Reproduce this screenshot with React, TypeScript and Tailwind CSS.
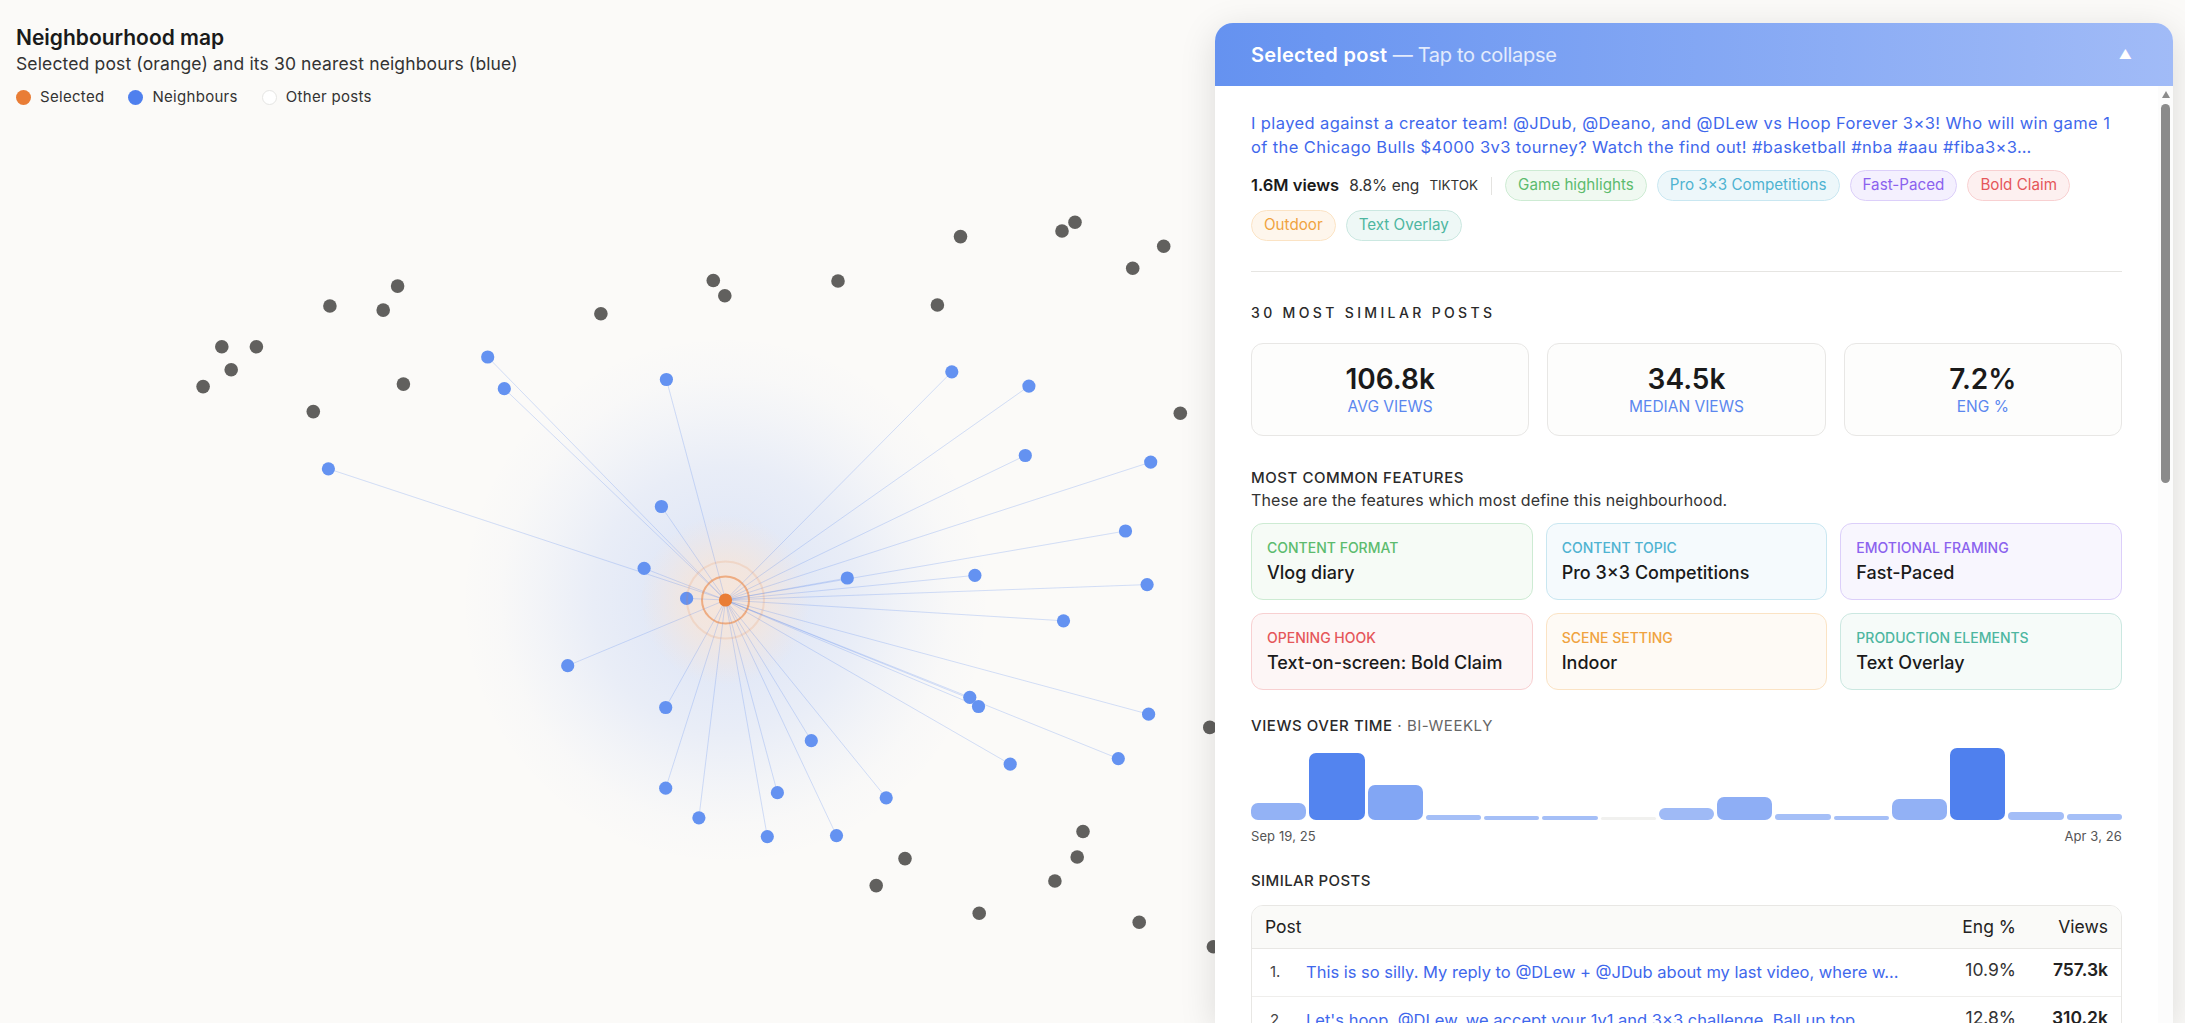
const center = { x: 725.5, y: 600 };

const others = [
  [960.5, 236.6], [1062, 231], [1075, 222.3], [1163.7, 246.3], [1132.7, 268.3],
  [713.3, 280.5], [724.8, 295.8], [838, 281], [937.4, 305], [397.6, 286.1],
  [329.9, 306], [383.2, 310.1], [600.9, 313.7], [221.8, 346.8], [256.4, 346.8],
  [231.2, 369.8], [203.1, 386.6], [403.4, 384.1], [313.3, 411.6], [1180.3, 413.2],
  [1209.8, 727.4], [1083, 831.5], [1077.2, 857], [905, 858.6], [876.2, 885.6],
  [1054.9, 881], [979.2, 913.2], [1139.2, 922.3], [1213.4, 946.8],
];

const neighbours = [
  [487.7, 357], [504.3, 388.7], [666.4, 379.5], [951.8, 371.8], [1028.9, 386.1],
  [1025.3, 455.5], [1150.7, 462.1], [328.4, 468.8], [661.4, 506.5], [1125.5, 531],
  [644.1, 568.3], [847.3, 578], [974.9, 575.4], [1147.1, 584.6], [686.6, 598.4],
  [1063.5, 620.8], [567.7, 665.7], [665.7, 707.5], [811.3, 740.7], [969.8, 697.3],
  [978.5, 706.5], [1148.6, 714.2], [1118.3, 758.6], [1010.2, 764.2], [886.2, 797.8],
  [665.7, 788.2], [777.4, 792.7], [698.9, 817.8], [767.3, 836.6], [836.5, 835.6],
];

const pills = [
  { label: "Game highlights", cls: "text-[#5cbb6e] bg-[#f0f9f1] border-[#cdebd3]" },
  { label: "Pro 3×3 Competitions", cls: "text-[#4fb3d1] bg-[#edf7fa] border-[#c9e7f1]" },
  { label: "Fast-Paced", cls: "text-[#8b62ee] bg-[#f4f0fe] border-[#dccffa]" },
  { label: "Bold Claim", cls: "text-[#e5575a] bg-[#fdf0f0] border-[#f8d0d1]" },
  { label: "Outdoor", cls: "text-[#f0a33f] bg-[#fef6ec] border-[#fbe3c4]" },
  { label: "Text Overlay", cls: "text-[#4db6a0] bg-[#eef8f6] border-[#cbe8e1]" },
];

const stats = [
  { value: "106.8k", label: "AVG VIEWS" },
  { value: "34.5k", label: "MEDIAN VIEWS" },
  { value: "7.2%", label: "ENG %" },
];

const features = [
  { label: "CONTENT FORMAT", value: "Vlog diary", cls: "bg-[#f6fbf6] border-[#cdebd3]", text: "text-[#5cbb6e]" },
  { label: "CONTENT TOPIC", value: "Pro 3×3 Competitions", cls: "bg-[#f5fafd] border-[#c9e7f1]", text: "text-[#4fb3d1]" },
  { label: "EMOTIONAL FRAMING", value: "Fast-Paced", cls: "bg-[#f8f6fe] border-[#dccffa]", text: "text-[#8b62ee]" },
  { label: "OPENING HOOK", value: "Text-on-screen: Bold Claim", cls: "bg-[#fdf6f6] border-[#f8d0d1]", text: "text-[#e5575a]" },
  { label: "SCENE SETTING", value: "Indoor", cls: "bg-[#fefaf5] border-[#fbe3c4]", text: "text-[#f0a33f]" },
  { label: "PRODUCTION ELEMENTS", value: "Text Overlay", cls: "bg-[#f6fbf9] border-[#cbe8e1]", text: "text-[#4db6a0]" },
];

const bars = [
  { h: 17, cls: "bg-[#93b2f5]" },
  { h: 67, cls: "bg-[#5384ef]" },
  { h: 35, cls: "bg-[#82a6f4]" },
  { h: 5, cls: "bg-[#a5bff7]" },
  { h: 4, cls: "bg-[#a5bff7]" },
  { h: 4, cls: "bg-[#a5bff7]" },
  { h: 3, cls: "bg-[#f1f1ef]" },
  { h: 12, cls: "bg-[#9fbaf6]" },
  { h: 23, cls: "bg-[#8eaef5]" },
  { h: 6, cls: "bg-[#a5bff7]" },
  { h: 4, cls: "bg-[#a5bff7]" },
  { h: 21, cls: "bg-[#92b1f5]" },
  { h: 72, cls: "bg-[#4f80ee]" },
  { h: 8, cls: "bg-[#a3bdf7]" },
  { h: 6, cls: "bg-[#a5bff7]" },
];

const rows = [
  { n: "1.", text: "This is so silly. My reply to @DLew + @JDub about my last video, where w…", eng: "10.9%", views: "757.3k" },
  { n: "2.", text: "Let's hoop, @DLew, we accept your 1v1 and 3×3 challenge. Ball up top.", eng: "12.8%", views: "310.2k" },
];

function NeighbourMap() {
  return (
    <svg className="absolute inset-0" width="2185" height="1023">
      <defs>
        <radialGradient id="blueGlow">
          <stop offset="0%" stopColor="#4f80ee" stopOpacity="0.17" />
          <stop offset="30%" stopColor="#4f80ee" stopOpacity="0.14" />
          <stop offset="50%" stopColor="#4f80ee" stopOpacity="0.105" />
          <stop offset="70%" stopColor="#4f80ee" stopOpacity="0.05" />
          <stop offset="85%" stopColor="#4f80ee" stopOpacity="0.015" />
          <stop offset="100%" stopColor="#4f80ee" stopOpacity="0" />
        </radialGradient>
        <radialGradient id="orangeGlow">
          <stop offset="0%" stopColor="#f9e5d6" stopOpacity="0.9" />
          <stop offset="40%" stopColor="#f9e5d6" stopOpacity="0.72" />
          <stop offset="100%" stopColor="#f9e5d6" stopOpacity="0" />
        </radialGradient>
      </defs>
      <circle cx={center.x} cy={center.y} r="265" fill="url(#blueGlow)" />
      <circle cx={center.x} cy={center.y} r="85" fill="url(#orangeGlow)" />
      {neighbours.map(([x, y], i) => (
        <line key={i} x1={center.x} y1={center.y} x2={x} y2={y} stroke="#4f80ee" strokeOpacity="0.24" strokeWidth="1" />
      ))}
      {others.map(([x, y], i) => (
        <circle key={i} cx={x} cy={y} r="6.8" fill="#61605e" />
      ))}
      {neighbours.map(([x, y], i) => (
        <circle key={i} cx={x} cy={y} r="6.6" fill="#6492f1" />
      ))}
      <circle cx={center.x} cy={center.y} r="38.5" fill="none" stroke="#e97d36" strokeOpacity="0.15" strokeWidth="2" />
      <circle cx={center.x} cy={center.y} r="23.5" fill="none" stroke="#e97d36" strokeOpacity="0.55" strokeWidth="2" />
      <circle cx={center.x} cy={center.y} r="6.6" fill="#e97d36" />
    </svg>
  );
}

function DetailPanel() {
  return (
    <div className="absolute left-[1215px] right-[12px] top-[23px] bottom-0 flex flex-col overflow-hidden rounded-t-[18px] bg-white shadow-[0_8px_36px_rgba(0,0,0,0.13)]">
      {/* Header */}
      <div className="flex h-[63px] shrink-0 items-center justify-between bg-gradient-to-r from-[#6592f0] to-[#a1bbf7] pl-[36px] pr-[41px] text-white">
        <div className="text-[20px] leading-7 tracking-[-0.3px] text-white/80">
          <span className="font-semibold tracking-[0.3px] text-white">Selected post</span> — Tap to collapse
        </div>
        <span className="text-[13px] leading-none">▲</span>
      </div>

      <div className="flex min-h-0 flex-1">
        <div className="min-w-0 flex-1 overflow-hidden pl-[36px] pr-[36px] pt-[25px]">
          <p className="text-[16.5px] leading-6 tracking-[0.39px] text-[#3f68ec]">
            I played against a creator team! @JDub, @Deano, and @DLew vs Hoop Forever 3×3! Who will win game 1
            <br />
            of the Chicago Bulls $4000 3v3 tourney? Watch the find out! #basketball #nba #aau #fiba3×3…
          </p>

          {/* Meta + tags */}
          <div className="mt-[11px] flex flex-wrap items-center gap-x-[10px] gap-y-[9px]">
            <span className="text-[16.5px] font-semibold text-[#1a1a1a]">1.6M views</span>
            <span className="text-[15.5px] text-[#333]">8.8% eng</span>
            <span className="text-[13.4px] text-[#333]">TIKTOK</span>
            <span className="mx-[3px] h-[18px] w-px bg-[#e4e3e0]" />
            {pills.map((p) => (
              <span key={p.label} className={`flex h-[31px] items-center rounded-full border px-[12px] text-[15.2px] ${p.cls}`}>
                {p.label}
              </span>
            ))}
          </div>

          <div className="mt-[30px] h-px bg-[#e6e5e2]" />

          <h3 className="mt-[31px] text-[14px] font-medium leading-5 tracking-[3.35px] text-[#2a2a2a]">30 MOST SIMILAR POSTS</h3>

          {/* Stats */}
          <div className="mt-[20px] grid grid-cols-3 gap-[18px]">
            {stats.map((s) => (
              <div key={s.label} className="flex h-[93px] flex-col items-center justify-center rounded-xl border border-[#e8e7e5] bg-[#fdfdfc]">
                <div className="text-[28px] font-semibold leading-8 text-[#1a1a1a]">{s.value}</div>
                <div className="mt-[2px] text-[15.5px] leading-5 text-[#5b87ef]">{s.label}</div>
              </div>
            ))}
          </div>

          <h3 className="mt-[32px] text-[15px] font-medium leading-5 tracking-[0.55px] text-[#2a2a2a]">MOST COMMON FEATURES</h3>
          <p className="mt-[1px] text-[16px] leading-[22px] tracking-[0.1px] text-[#333]">These are the features which most define this neighbourhood.</p>

          {/* Features */}
          <div className="mt-[12px] grid grid-cols-3 gap-[13px]">
            {features.map((f) => (
              <div key={f.label} className={`flex h-[77px] flex-col justify-center rounded-xl border px-[15px] ${f.cls}`}>
                <div className={`text-[14px] font-medium leading-5 ${f.text}`}>{f.label}</div>
                <div className="mt-[3px] text-[18px] font-medium leading-6 text-[#1a1a1a]">{f.value}</div>
              </div>
            ))}
          </div>

          <h3 className="mt-[26px] text-[15px] font-medium leading-5 tracking-[0.55px] text-[#2a2a2a]">
            VIEWS OVER TIME <span className="font-normal text-[#666]">· BI-WEEKLY</span>
          </h3>

          {/* Bars */}
          <div className="mt-[12px] flex h-[72px] items-end gap-[3px]">
            {bars.map((b, i) => (
              <div key={i} className={`flex-1 rounded-[7px] ${b.cls}`} style={{ height: b.h }} />
            ))}
          </div>
          <div className="mt-[8px] flex justify-between text-[13px] leading-4 tracking-[0.1px] text-[#555]">
            <span>Sep 19, 25</span>
            <span>Apr 3, 26</span>
          </div>

          <h3 className="mt-[27px] text-[15px] font-medium leading-5 tracking-[0.4px] text-[#2a2a2a]">SIMILAR POSTS</h3>

          {/* Table */}
          <div className="mt-[14px] overflow-hidden rounded-xl border border-[#e8e7e4]">
            <div className="flex h-[43px] items-center border-b border-[#e8e7e4] bg-[#fafaf8] px-[13px] text-[17.5px] text-[#222]">
              <span className="flex-1">Post</span>
              <span className="w-[60px] text-right">Eng %</span>
              <span className="w-[92px] text-right">Views</span>
            </div>
            {rows.map((r) => (
              <div key={r.n} className="flex h-[48px] items-center border-b border-[#efeeec] pl-[18px] pr-[13px]">
                <span className="w-[36px] shrink-0 text-[15px] text-[#444]">{r.n}</span>
                <span className="w-[610px] shrink-0 truncate text-[16.5px] text-[#3f68ec]">{r.text}</span>
                <span className="flex-1 pb-[5px] text-right text-[17.5px] text-[#333]">{r.eng}</span>
                <span className="w-[92px] pb-[5px] text-right text-[17.5px] font-semibold text-[#222]">{r.views}</span>
              </div>
            ))}
          </div>
        </div>

        {/* Scrollbar */}
        <div className="flex w-[15px] shrink-0 flex-col items-center bg-[#fcfcfc] pt-[5px]">
          <div className="h-0 w-0 border-x-[4.5px] border-b-[7px] border-x-transparent border-b-[#8b8b8b]" />
          <div className="mt-[6px] h-[379px] w-[9px] rounded-full bg-[#8b8b8b]" />
        </div>
      </div>
    </div>
  );
}

export default function App() {
  return (
    <div className="relative h-screen w-full overflow-hidden bg-[#fbfaf8] font-['Inter',sans-serif] text-[#1a1a1a]">
      <NeighbourMap />

      <div className="relative pl-[16px] pt-[24px]">
        <h1 className="text-[21px] font-semibold leading-7">Neighbourhood map</h1>
        <p className="text-[17.5px] leading-6 tracking-[0.14px] text-[#333]">Selected post (orange) and its 30 nearest neighbours (blue)</p>
        <div className="mt-[11px] flex items-center gap-[24px] text-[15px] leading-5 tracking-[0.3px] text-[#333]">
          <span className="flex items-center gap-[9px]">
            <span className="h-[15px] w-[15px] rounded-full bg-[#e97d36]" />
            Selected
          </span>
          <span className="flex items-center gap-[9px]">
            <span className="h-[15px] w-[15px] rounded-full bg-[#4f80ee]" />
            Neighbours
          </span>
          <span className="flex items-center gap-[9px]">
            <span className="h-[15px] w-[15px] rounded-full border border-[#e5e5e3] bg-white" />
            Other posts
          </span>
        </div>
      </div>

      <DetailPanel />
    </div>
  );
}
